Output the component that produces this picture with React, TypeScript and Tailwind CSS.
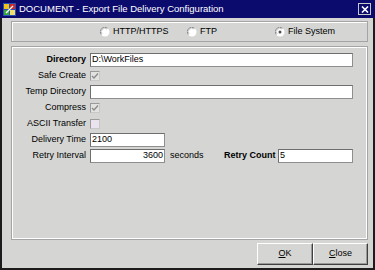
import React from "react";

const font = { fontFamily: '"Liberation Sans", Arial, sans-serif' };

function Radio({ checked }: { checked?: boolean }) {
  return (
    <svg width="10" height="10" viewBox="0 0 10 10" className="shrink-0">
      <circle cx="5" cy="5" r="4.5" fill="#ffffff" />
      <path d="M1.2 7.5 A4.5 4.5 0 0 1 7.5 1.2" stroke="#8a8a8a" strokeWidth="1" fill="none" />
      <path d="M2.2 7 A3.4 3.4 0 0 1 7 2.2" stroke="#c8c8c8" strokeWidth="1" fill="none" />
      {checked && <circle cx="5" cy="5" r="1.5" fill="#505050" />}
    </svg>
  );
}

function Checkbox({ checked, tint }: { checked?: boolean; tint?: boolean }) {
  return (
    <div
      className={`w-[10px] h-[10px] border border-[#9a9a9a] border-r-[#c8c8c8] border-b-[#c8c8c8] flex items-center justify-center ${
        tint ? "bg-[#ebe4ee]" : "bg-[#e2e2e0]"
      }`}
    >
      {checked && (
        <svg width="8" height="8" viewBox="0 0 8 8">
          <path d="M1 4 L3 6 L7 1.5" stroke="#8a8a8a" strokeWidth="1.3" fill="none" />
        </svg>
      )}
    </div>
  );
}

function Field({
  value,
  width,
  right,
}: {
  value?: string;
  width: string;
  right?: boolean;
}) {
  return (
    <div
      className={`${width} h-[14px] shrink-0 bg-white border border-[#6e6e6e] border-r-[#8e8e8e] border-b-[#8e8e8e] flex items-center px-[1px] text-[9px] text-black ${
        right ? "justify-end" : ""
      }`}
    >
      {value}
    </div>
  );
}

function Row({
  label,
  bold,
  children,
}: {
  label: string;
  bold?: boolean;
  children: React.ReactNode;
}) {
  return (
    <div className="flex items-center h-[14px]">
      <div className={`w-[74px] shrink-0 whitespace-nowrap text-right mr-[4px] text-[9px] text-black ${bold ? "font-bold" : ""}`}>
        {label}
      </div>
      {children}
    </div>
  );
}

function Button({ children, width }: { children: React.ReactNode; width: string }) {
  return (
    <div
      className={`${width} h-[22px] flex items-center justify-center text-[9px] text-black border border-t-white border-l-white border-r-[#404040] border-b-[#404040] shadow-[inset_-1px_-1px_0_#9a9a9a]`}
    >
      {children}
    </div>
  );
}

export default function App() {
  return (
    <div className="w-[375px] h-[270px] flex flex-col bg-[#d5d5d3]" style={font}>
      {/* Title bar */}
      <div className="h-[18px] bg-[#0b0b6e] flex items-center pl-[3px] pr-[4px] shrink-0">
        <svg width="13" height="13" viewBox="0 0 13 13" className="shrink-0">
          <rect x="0" y="0" width="13" height="13" fill="#2a4fb0" />
          <rect x="1" y="1" width="5" height="5" fill="#f2c21a" />
          <rect x="7" y="1" width="5" height="5" fill="#d02828" />
          <rect x="1" y="7" width="5" height="5" fill="#38a838" />
          <rect x="7" y="7" width="5" height="5" fill="#f0e070" />
          <path d="M3 10 L10 3" stroke="#ffffff" strokeWidth="1.2" />
        </svg>
        <span className="ml-[3px] text-white text-[9.5px] leading-none">
          DOCUMENT - Export File Delivery Configuration
        </span>
        <div className="ml-auto w-[13px] h-[12px] border border-[#c8c8c8] bg-[#0b0b6e] flex items-center justify-center">
          <svg width="8" height="7" viewBox="0 0 8 7">
            <path d="M1 0.5 L7 6.5 M7 0.5 L1 6.5" stroke="#ffffff" strokeWidth="1.6" />
          </svg>
        </div>
      </div>

      {/* Body */}
      <div className="flex-1 flex flex-col border-l-2 border-r-2 border-b-2 border-[#1c1c1c] pl-[9px] pr-[5px] pt-[3px]">
        {/* Protocol radios */}
        <div className="h-[21px] border border-[#a4a4a4] shadow-[inset_1px_1px_0_#ffffff] flex items-center pl-[88px] text-[9px] text-black">
          <div className="w-[87px] flex items-center">
            <Radio />
            <span className="ml-[3px]">HTTP/HTTPS</span>
          </div>
          <div className="w-[88px] flex items-center">
            <Radio />
            <span className="ml-[3px]">FTP</span>
          </div>
          <div className="flex items-center">
            <Radio checked />
            <span className="ml-[3px]">File System</span>
          </div>
        </div>

        {/* Settings */}
        <div className="mt-[4px] h-[194px] border border-[#a4a4a4] shadow-[inset_1px_1px_0_#ffffff,inset_-1px_-1px_0_#ffffff] pt-[6px] flex flex-col gap-[2px]">
          <Row label="Directory" bold>
            <Field value="D:\WorkFiles" width="w-[263px]" />
          </Row>
          <Row label="Safe Create">
            <Checkbox checked />
          </Row>
          <Row label="Temp Directory">
            <Field width="w-[263px]" />
          </Row>
          <Row label="Compress">
            <Checkbox checked />
          </Row>
          <Row label="ASCII Transfer">
            <Checkbox tint />
          </Row>
          <Row label="Delivery Time">
            <Field value="2100" width="w-[75px]" />
          </Row>
          <Row label="Retry Interval">
            <Field value="3600" width="w-[75px]" right />
            <span className="ml-[5px] w-[54px] shrink-0 text-[9px] text-black">seconds</span>
            <span className="w-[50px] shrink-0 whitespace-nowrap text-right mr-[4px] text-[9px] font-bold text-black">
              Retry Count
            </span>
            <Field value="5" width="w-[75px]" />
          </Row>
        </div>

        {/* Buttons */}
        <div className="mt-[3px] flex justify-end">
          <Button width="w-[56px]">
            <span className="underline">O</span>K
          </Button>
          <Button width="w-[55px]">
            <span className="underline">C</span>lose
          </Button>
        </div>
      </div>
    </div>
  );
}
